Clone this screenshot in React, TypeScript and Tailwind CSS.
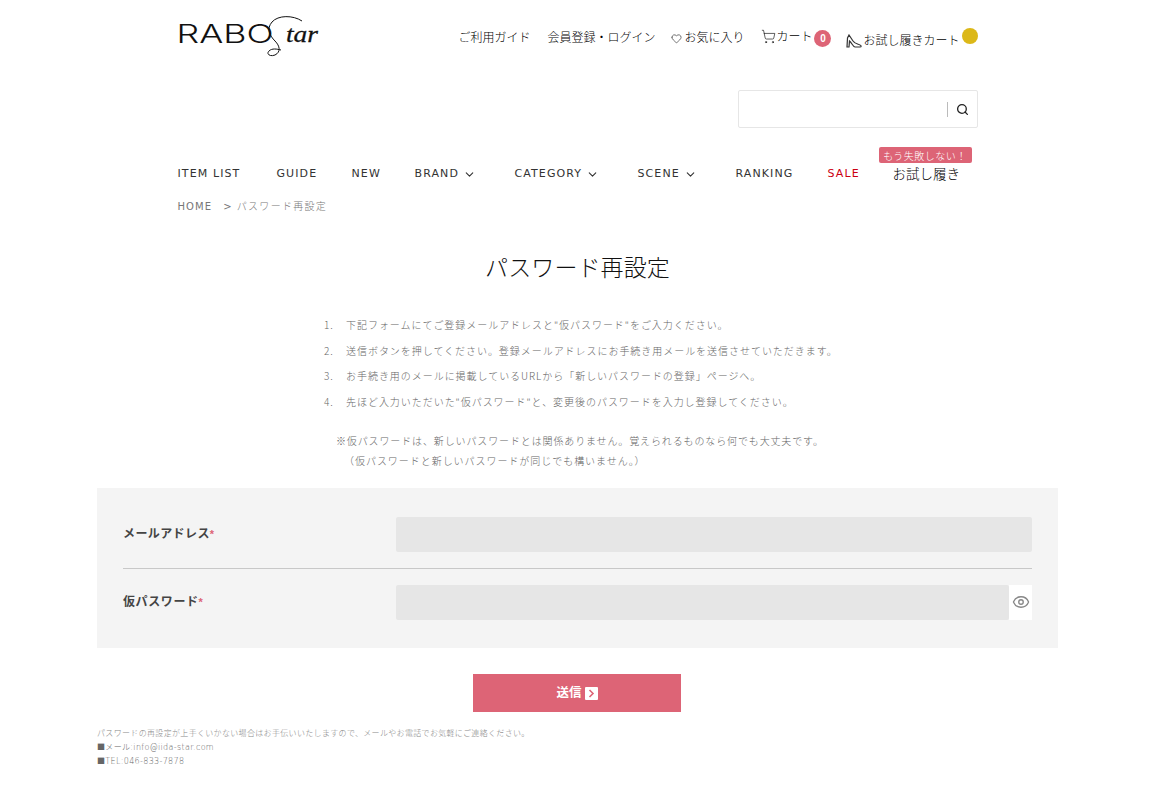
import { ChevronDown, Search, Eye, Heart, ShoppingCart } from "lucide-react";

const JP = "font-['Liberation_Sans','Noto_Sans_CJK_JP',sans-serif]";

const NAV = [
  { label: "ITEM LIST", w: "w-[99px]" },
  { label: "GUIDE", w: "w-[75px]" },
  { label: "NEW", w: "w-[63px]" },
  { label: "BRAND", w: "w-[100px]", arrow: true },
  { label: "CATEGORY", w: "w-[123px]", arrow: true },
  { label: "SCENE", w: "w-[98px]", arrow: true },
  { label: "RANKING", w: "w-[92px]" },
];

const STEPS = [
  "下記フォームにてご登録メールアドレスと\"仮パスワード\"をご入力ください。",
  "送信ボタンを押してください。登録メールアドレスにお手続き用メールを送信させていただきます。",
  "お手続き用のメールに掲載しているURLから「新しいパスワードの登録」ページへ。",
  "先ほど入力いただいた\"仮パスワード\"と、変更後のパスワードを入力し登録してください。",
];

function Logo() {
  return (
    <svg width="142" height="46" viewBox="0 0 142 46" className="block">
      <text x="-1.5" y="31" fontFamily="Inter, 'Liberation Sans', sans-serif" fontWeight="300" fontSize="25" textLength="97" lengthAdjust="spacingAndGlyphs" fill="#111">
        RABO
      </text>
      <path d="M124 9 C115 3 100 3 94 10 C88 17 92 24 97 29 C102 34 103 40 97 43 C92 45 88 42 91 39 C94 36 99 37 103 38" fill="none" stroke="#111" strokeWidth="1" />
      <text x="108" y="30" fontFamily="'Liberation Serif', serif" fontStyle="italic" fontSize="24" textLength="32" lengthAdjust="spacingAndGlyphs" stroke="#111" strokeWidth="0.3" fill="#111">
        tar
      </text>
    </svg>
  );
}

function Pump() {
  return (
    <svg width="16" height="14" viewBox="0 0 16 14" fill="none" stroke="#333" strokeWidth="1.2">
      <path d="M1 13 L1.5 4 L3 1 L7 7 C9 10 12 10 14 11 C15.5 11.5 15.5 13 14 13 L9 13 C7 13 6 9 3.5 7 L3 13 Z" />
    </svg>
  );
}

export default function App() {
  return (
    <div className={`w-[1155px] h-[788px] bg-white text-[#333] overflow-hidden ${JP}`}>
      <div className="mx-auto w-[800px]">
        {/* header */}
        <div className="flex items-start justify-between h-[90px] pt-[12px]">
          <Logo />
          <div className="flex items-center text-[12px] font-light text-black mt-[17px] h-[18px]">
            <span>ご利用ガイド</span>
            <span className="ml-[17px]">会員登録・ログイン</span>
            <span className="ml-[16px] flex items-center gap-[2px]">
              <Heart size={11} strokeWidth={1.2} />
              お気に入り
            </span>
            <span className="ml-[17px] flex items-center -mt-[3px]">
              <ShoppingCart size={15} strokeWidth={1} />
              カート
              <span className="ml-[2px] mt-[3px] w-[17px] h-[17px] rounded-full bg-[#dd6476] text-white text-[10px] font-bold flex items-center justify-center">0</span>
            </span>
            <span className="ml-[15px] flex items-center gap-[1px] mt-[5px]">
              <Pump />
              お試し履きカート
              <span className="ml-[1px] -mt-[9px] w-[16px] h-[16px] rounded-full bg-[#dcb818]" />
            </span>
          </div>
        </div>

        {/* search */}
        <div className="flex justify-end">
          <div className="w-[240px] h-[38px] border border-[#e6e6e6] rounded-[2px] flex items-center justify-end">
            <span className="w-px h-[15px] bg-[#bbb]" />
            <span className="w-[29px] flex justify-center">
              <Search size={13} strokeWidth={2.4} className="text-[#222]" />
            </span>
          </div>
        </div>

        {/* nav */}
        <div className="flex items-center h-[24px] mt-[34px] text-[11px] tracking-[1.1px] text-[#333] font-['DejaVu_Sans','Noto_Sans_CJK_JP',sans-serif] whitespace-nowrap">
          {NAV.map((n) => (
            <span key={n.label} className={`flex items-center ${n.w}`}>
              {n.label}
              {n.arrow && <ChevronDown size={13} strokeWidth={2} className="ml-[4px]" />}
            </span>
          ))}
          <span className="w-[65px] text-[#cc0011]">SALE</span>
          <span className="relative -mt-[1px] text-[13.5px] tracking-normal font-['Noto_Sans_CJK_JP',sans-serif] font-light text-black">
            お試し履き
            <span className="absolute left-[-14px] top-[-16px] w-[93px] h-[16px] rounded-[2px] bg-[#dd6476] text-white text-[10px] tracking-[0.5px] flex items-center justify-center">もう失敗しない！</span>
          </span>
        </div>

        {/* breadcrumb */}
        <div className="flex items-center h-[20px] mt-[10px] text-[10px] tracking-[1.1px] text-[#777] font-['DejaVu_Sans','Noto_Sans_CJK_JP',sans-serif]">
          <span>HOME</span>
          <span className="ml-[11px]">&gt;</span>
          <span className="ml-[4px] font-light tracking-[1.3px]">パスワード再設定</span>
        </div>
      </div>

      <h1 className="mt-[34px] text-center text-[23px] leading-[32px] font-light text-[#111] font-['Noto_Sans_CJK_JP',sans-serif] tracking-[0.1px]">
        パスワード再設定
      </h1>

      {/* steps */}
      <div className="ml-[324px] mt-[30px] text-[10px] leading-[25.5px] text-[#666] tracking-[0.96px] font-light font-['Noto_Sans_CJK_JP',sans-serif]">
        <ol>
          {STEPS.map((s, i) => (
            <li key={i} className="flex">
              <span className="w-[22px]">{i + 1}.</span>
              <span>{s}</span>
            </li>
          ))}
        </ol>
        <p className="mt-[17px] ml-[12px] leading-[20px] tracking-[0.87px]">
          ※仮パスワードは、新しいパスワードとは関係ありません。覚えられるものなら何でも大丈夫です。
          <br />
          <span className="ml-[8px] tracking-[0.96px]">（仮パスワードと新しいパスワードが同じでも構いません。）</span>
        </p>
      </div>

      {/* form */}
      <div className="mx-auto mt-[17px] w-[961px] h-[160px] bg-[#f4f4f4] px-[26px] pt-[29px]">
        <div className="flex h-[52px] border-b border-[#c8c8c8]">
          <label className="w-[273px] pt-[7px] text-[12px] leading-[20px] font-bold text-[#444] tracking-[0.4px]">
            メールアドレス<span className="text-[#dd6476] text-[11px] align-top">*</span>
          </label>
          <div className="flex-1 h-[35px] bg-[#e6e6e6] rounded-[2px]" />
        </div>
        <div className="flex mt-[16px]">
          <label className="w-[273px] pt-[7px] text-[12px] leading-[20px] font-bold text-[#444] tracking-[0.6px]">
            仮パスワード<span className="text-[#dd6476] text-[11px] align-top">*</span>
          </label>
          <div className="flex-1 h-[35px] flex">
            <div className="flex-1 bg-[#e6e6e6] rounded-[2px]" />
            <div className="w-[23px] bg-white flex items-center justify-center pb-[1px]">
              <Eye size={18} strokeWidth={1.8} className="text-[#888]" />
            </div>
          </div>
        </div>
      </div>

      {/* submit */}
      <div className="flex pl-[473px] mt-[26px]">
        <button className="w-[208px] h-[38px] bg-[#dd6476] text-white text-[12.5px] font-bold flex items-center justify-center gap-[3px]">
          送信
          <span className="w-[13px] h-[13px] bg-white rounded-[1px] flex items-center justify-center">
            <svg width="7" height="9" viewBox="0 0 7 9" fill="none" stroke="#dd6476" strokeWidth="1.6"><path d="M1.5 1 L5 4.5 L1.5 8" /></svg>
          </span>
        </button>
      </div>

      {/* note */}
      <div className="ml-[97px] mt-[15px] text-[8px] leading-[14px] tracking-[0.33px] text-[#888] font-light font-['DejaVu_Sans','Noto_Sans_CJK_JP',sans-serif]">
        <p>パスワードの再設定が上手くいかない場合はお手伝いいたしますので、メールやお電話でお気軽にご連絡ください。</p>
        <p className="text-[#666]">■メール:info@iida-star.com</p>
        <p className="text-[#666]">■TEL:046-833-7878</p>
      </div>
    </div>
  );
}
